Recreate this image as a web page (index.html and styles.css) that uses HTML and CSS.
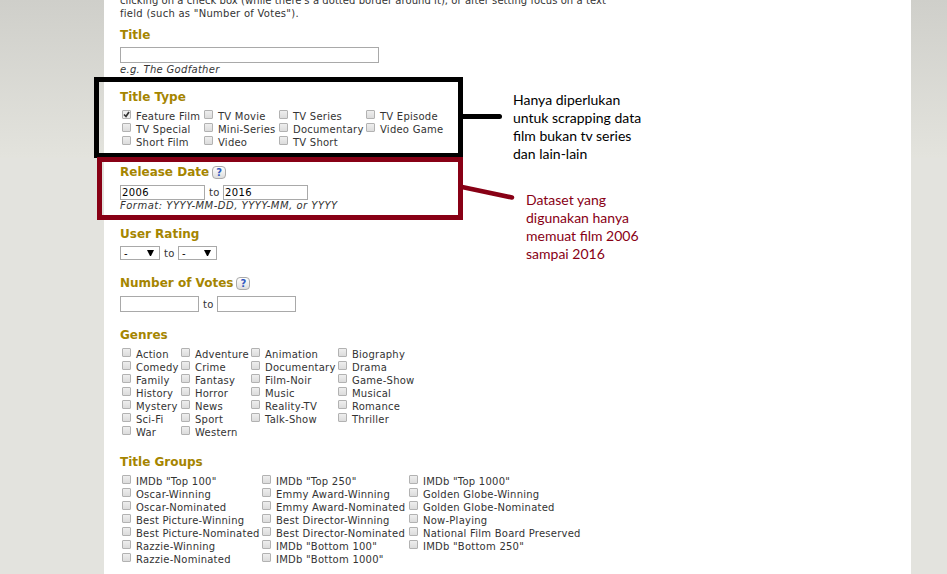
FILE: index.html
```html
<!DOCTYPE html>
<html lang="en">
<head>
<meta charset="utf-8">
<title>Advanced Title Search</title>
<link rel="stylesheet" href="styles.css">
</head>
<body>
<main class="page">
<p class="intro"><span class="tight">clicking on a check box (while there's a dotted border around it), or after setting focus on a text</span><br>field (such as "Number of Votes").</p>

<section class="sec sec-title">
<h2>Title</h2>
<div class="fields"><input class="box wide" type="text" aria-label="Title"></div>
<p class="hint">e.g. The Godfather</p>
</section>

<section class="sec sec-type">
<h2>Title Type</h2>
<div class="checks cols-type">
<label><input type="checkbox" checked><span>Feature Film</span></label><label><input type="checkbox"><span>TV Movie</span></label><label><input type="checkbox"><span>TV Series</span></label><label><input type="checkbox"><span>TV Episode</span></label>
<label><input type="checkbox"><span>TV Special</span></label><label><input type="checkbox"><span>Mini-Series</span></label><label><input type="checkbox"><span>Documentary</span></label><label><input type="checkbox"><span>Video Game</span></label>
<label><input type="checkbox"><span>Short Film</span></label><label><input type="checkbox"><span>Video</span></label><label><input type="checkbox"><span>TV Short</span></label>
</div>
</section>

<section class="sec sec-date">
<h2>Release Date <span class="help">?</span></h2>
<div class="fields"><input class="box date" type="text" value="2006" aria-label="From"><span class="to">to</span><input class="box date" type="text" value="2016" aria-label="To"></div>
<p class="hint">Format: YYYY-MM-DD, YYYY-MM, or YYYY</p>
</section>

<section class="sec sec-rating">
<h2>User Rating</h2>
<div class="fields"><span class="select">-<svg width="7" height="6" viewBox="0 0 7 6"><path d="M0 0H7L4 6H3Z"/></svg></span><span class="to">to</span><span class="select narrow">-<svg width="7" height="6" viewBox="0 0 7 6"><path d="M0 0H7L4 6H3Z"/></svg></span></div>
</section>

<section class="sec sec-votes">
<h2>Number of Votes <span class="help">?</span></h2>
<div class="fields"><input class="box votes" type="text" aria-label="Minimum"><span class="to">to</span><input class="box votes" type="text" aria-label="Maximum"></div>
</section>

<section class="sec sec-genres">
<h2>Genres</h2>
<div class="checks cols-genres">
<label><input type="checkbox"><span>Action</span></label><label><input type="checkbox"><span>Adventure</span></label><label><input type="checkbox"><span>Animation</span></label><label><input type="checkbox"><span>Biography</span></label>
<label><input type="checkbox"><span>Comedy</span></label><label><input type="checkbox"><span>Crime</span></label><label><input type="checkbox"><span>Documentary</span></label><label><input type="checkbox"><span>Drama</span></label>
<label><input type="checkbox"><span>Family</span></label><label><input type="checkbox"><span>Fantasy</span></label><label><input type="checkbox"><span>Film-Noir</span></label><label><input type="checkbox"><span>Game-Show</span></label>
<label><input type="checkbox"><span>History</span></label><label><input type="checkbox"><span>Horror</span></label><label><input type="checkbox"><span>Music</span></label><label><input type="checkbox"><span>Musical</span></label>
<label><input type="checkbox"><span>Mystery</span></label><label><input type="checkbox"><span>News</span></label><label><input type="checkbox"><span>Reality-TV</span></label><label><input type="checkbox"><span>Romance</span></label>
<label><input type="checkbox"><span>Sci-Fi</span></label><label><input type="checkbox"><span>Sport</span></label><label><input type="checkbox"><span>Talk-Show</span></label><label><input type="checkbox"><span>Thriller</span></label>
<label><input type="checkbox"><span>War</span></label><label><input type="checkbox"><span>Western</span></label>
</div>
</section>

<section class="sec sec-groups">
<h2>Title Groups</h2>
<div class="checks cols-groups">
<label><input type="checkbox"><span>IMDb "Top 100"</span></label><label><input type="checkbox"><span>IMDb "Top 250"</span></label><label><input type="checkbox"><span>IMDb "Top 1000"</span></label>
<label><input type="checkbox"><span>Oscar-Winning</span></label><label><input type="checkbox"><span>Emmy Award-Winning</span></label><label><input type="checkbox"><span>Golden Globe-Winning</span></label>
<label><input type="checkbox"><span>Oscar-Nominated</span></label><label><input type="checkbox"><span>Emmy Award-Nominated</span></label><label><input type="checkbox"><span>Golden Globe-Nominated</span></label>
<label><input type="checkbox"><span>Best Picture-Winning</span></label><label><input type="checkbox"><span>Best Director-Winning</span></label><label><input type="checkbox"><span>Now-Playing</span></label>
<label><input type="checkbox"><span>Best Picture-Nominated</span></label><label><input type="checkbox"><span>Best Director-Nominated</span></label><label><input type="checkbox"><span>National Film Board Preserved</span></label>
<label><input type="checkbox"><span>Razzie-Winning</span></label><label><input type="checkbox"><span>IMDb "Bottom 100"</span></label><label><input type="checkbox"><span>IMDb "Bottom 250"</span></label>
<label><input type="checkbox"><span>Razzie-Nominated</span></label><label><input type="checkbox"><span>IMDb "Bottom 1000"</span></label>
</div>
</section>
</main>

<svg class="marks" width="947" height="574" viewBox="0 0 947 574">
<rect x="96.5" y="79.5" width="364" height="76" fill="none" stroke="#000" stroke-width="5"/>
<path d="M462 116.5H499.500" stroke="#000" stroke-width="5" stroke-linecap="round"/>
<rect x="99.5" y="159.5" width="361" height="58" fill="none" stroke="#880015" stroke-width="5"/>
<path d="M462 187L512 197.500" stroke="#880015" stroke-width="4.500" stroke-linecap="round"/>
</svg>
<p class="note note-type">Hanya diperlukan<br>untuk scrapping data<br>film bukan tv series<br>dan lain-lain</p>
<p class="note note-date">Dataset yang<br>digunakan hanya<br>memuat film 2006<br>sampai 2016</p>
</body>
</html>
```
FILE: styles.css
```css
* { box-sizing: border-box; }
html, body { margin: 0; height: 574px; overflow: hidden; }
body {
  position: relative;
  background: #e3e3de linear-gradient(#cfcfca, #e3e3dd 158px, #e3e3de 158px) no-repeat;
  font: 10px/13px "DejaVu Sans", Verdana, sans-serif;
  letter-spacing: 0.24px;
  color: #333;
}
p, h2 { margin: 0; }
.page {
  width: 807px;
  height: 574px;
  margin-left: 104px;
  padding-left: 16px;
  background: #fff;
  overflow: hidden;
}
.intro { margin-top: -6px; height: 32px; white-space: nowrap; letter-spacing: 0.27px; }
.tight { letter-spacing: 0.06px; }
h2 {
  display: flex;
  align-items: center;
  gap: 3px;
  height: 16px;
  font-size: 12px;
  line-height: 16px;
  letter-spacing: 0;
  color: #a58500;
  white-space: nowrap;
}
.sec-title { height: 63px; }
.sec-type { height: 75px; }
.sec-date { height: 61px; }
.sec-rating { height: 50px; }
.sec-votes { height: 52px; }
.sec-genres { height: 127px; }
.sec-title h2, .sec-rating h2 { padding-top: 2px; }
.fields { display: flex; align-items: center; margin-top: 5px; }
.sec-date .fields { height: 15px; }
.box {
  height: 16px;
  margin: 0;
  padding: 0 1px;
  border: 1px solid #a9a9a9;
  background: #fff;
  font: inherit;
  letter-spacing: 0.35px;
  color: #000;
}
.date { width: 85px; height: 15px; }
.votes { width: 79px; }
.wide { width: 259px; }
.to { width: 18px; padding-left: 4px; }
.hint { font-style: italic; white-space: nowrap; letter-spacing: 0.3px; }
.sec-date .hint { margin-top: -1px; letter-spacing: 0.5px; }
.select {
  display: flex;
  align-items: center;
  justify-content: space-between;
  width: 40px;
  height: 14px;
  padding: 0 5px 0 3px;
  border: 1px solid #a9a9a9;
  color: #000;
}
.select svg { margin-top: -1px; }
.narrow { width: 39px; }
.help {
  width: 14px;
  height: 13px;
  margin-top: 1px;
  border: 1px solid #aaa;
  border-radius: 4px;
  background: linear-gradient(#fff, #ddd);
  font-size: 10px;
  line-height: 11px;
  text-align: center;
  color: #3058c0;
}
.checks { display: grid; margin: 5px 0 0 2px; grid-auto-rows: 13px; }
.cols-type { grid-template-columns: 82px 75px 87px 90px; }
.cols-genres { grid-template-columns: 59px 70px 87px 90px; }
.cols-groups { grid-template-columns: 140px 147px 180px; }
label { display: flex; white-space: nowrap; }
label span { margin-left: 5px; }
label input {
  appearance: none;
  flex: none;
  width: 9px;
  height: 9px;
  margin: 0;
  border: 1px solid #b2b2b2;
  border-radius: 1px;
  background: linear-gradient(#eee, #dcdcdc);
}
label input:checked {
  background: url("data:image/svg+xml,%3Csvg xmlns='http://www.w3.org/2000/svg' viewBox='0 0 7 7'%3E%3Cpath d='M1 3.500L3 5.500L6 1' fill='none' stroke='%23333' stroke-width='1.700'/%3E%3C/svg%3E") #eee;
}
.marks { position: absolute; inset: 0; pointer-events: none; }
.note { position: absolute; font: 14px/18px Lato, sans-serif; letter-spacing: 0; color: #000; white-space: nowrap; }
.note-type { left: 513px; top: 91px; }
.note-date { left: 526px; top: 191px; color: #880015; }
```
